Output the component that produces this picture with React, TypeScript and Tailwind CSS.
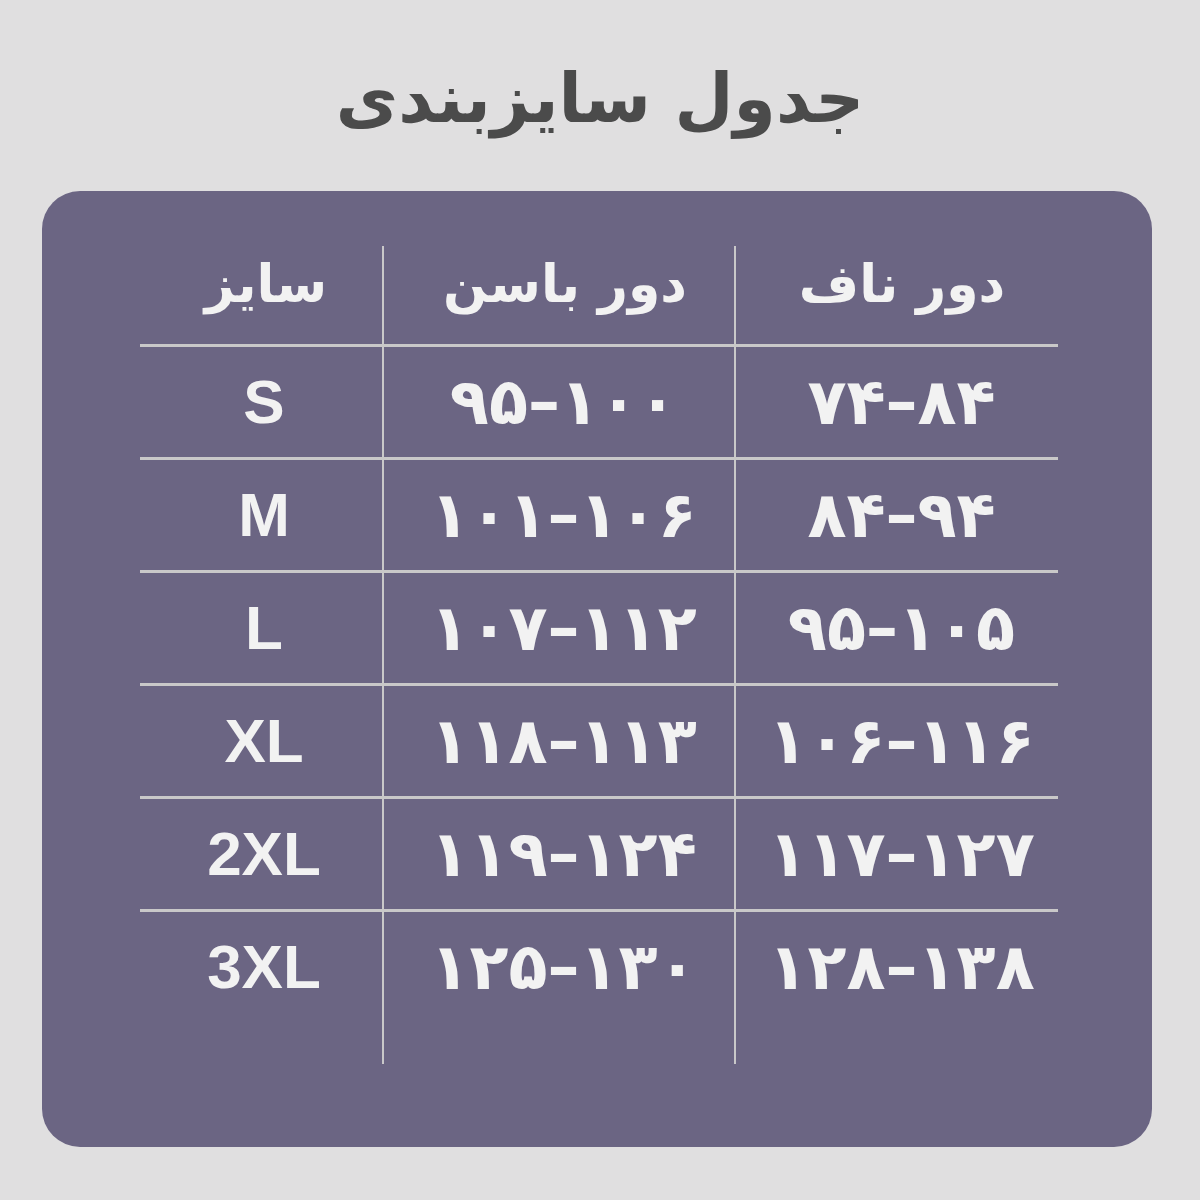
const rows = [
  { size: 'S', hip: '۹۵–۱۰۰', navel: '۷۴–۸۴' },
  { size: 'M', hip: '۱۰۱–۱۰۶', navel: '۸۴–۹۴' },
  { size: 'L', hip: '۱۰۷–۱۱۲', navel: '۹۵–۱۰۵' },
  { size: 'XL', hip: '۱۱۸–۱۱۳', navel: '۱۰۶–۱۱۶' },
  { size: '2XL', hip: '۱۱۹–۱۲۴', navel: '۱۱۷–۱۲۷' },
  { size: '3XL', hip: '۱۲۵–۱۳۰', navel: '۱۲۸–۱۳۸' },
]

function Num({ value }: { value: string }) {
  return (
    <span dir="ltr" className="font-['DejaVu_Sans',sans-serif] font-bold text-[64px] tracking-[9px] leading-none text-[#f2f2f2]">
      {value}
    </span>
  )
}

export default function App() {
  return (
    <main className="w-[1200px] h-[1200px] bg-[#e0dfe0] flex flex-col">
      <div className="h-[191px] flex items-center justify-center pt-[6px]">
        <h1 dir="rtl" className="font-['DejaVu_Sans',sans-serif] font-bold text-[68px] leading-none text-[#4b4b4b]">
          جدول سایزبندی
        </h1>
      </div>

      <div className="ml-[42px] w-[1110px] h-[956px] rounded-[38px] bg-[#6b6583] pt-[55px] pl-[98px]">
        <div className="w-[918px] flex flex-col">
          {/* header */}
          <div className="grid grid-cols-[244px_352px_322px] h-[101px] border-b-[3px] border-[#c9c8c9]">
            <div className="border-r-2 border-[#c9c8c9] flex items-center justify-center pb-[22px] pl-[10px]">
              <span dir="rtl" className="font-['DejaVu_Sans',sans-serif] font-bold text-[52px] leading-none text-[#f2f2f2]">سایز</span>
            </div>
            <div className="border-r-2 border-[#c9c8c9] flex items-center justify-center pb-[22px] pl-[12px]">
              <span dir="rtl" className="font-['DejaVu_Sans',sans-serif] font-bold text-[52px] leading-none text-[#f2f2f2]">دور باسن</span>
            </div>
            <div className="flex items-center justify-center pb-[22px] pl-[10px]">
              <span dir="rtl" className="font-['DejaVu_Sans',sans-serif] font-bold text-[52px] leading-none text-[#f2f2f2]">دور ناف</span>
            </div>
          </div>

          {rows.map((r, i) => {
            const last = i === rows.length - 1
            return (
              <div
                key={r.size}
                className={`grid grid-cols-[244px_352px_322px] ${last ? 'h-[152px]' : 'h-[113px] border-b-[3px] border-[#c9c8c9]'}`}
              >
                <div className="border-r-2 border-[#c9c8c9]">
                  <div className="h-[110px] flex items-center justify-center pl-[6px]">
                    <span className="font-['Liberation_Sans',Arial,sans-serif] font-bold text-[62px] leading-none text-[#f2f2f2]">{r.size}</span>
                  </div>
                </div>
                <div className="border-r-2 border-[#c9c8c9]">
                  <div className="h-[110px] flex items-center justify-center pl-[9px]">
                    <Num value={r.hip} />
                  </div>
                </div>
                <div>
                  <div className="h-[110px] flex items-center justify-center pl-[9px]">
                    <Num value={r.navel} />
                  </div>
                </div>
              </div>
            )
          })}
        </div>
      </div>
    </main>
  )
}
